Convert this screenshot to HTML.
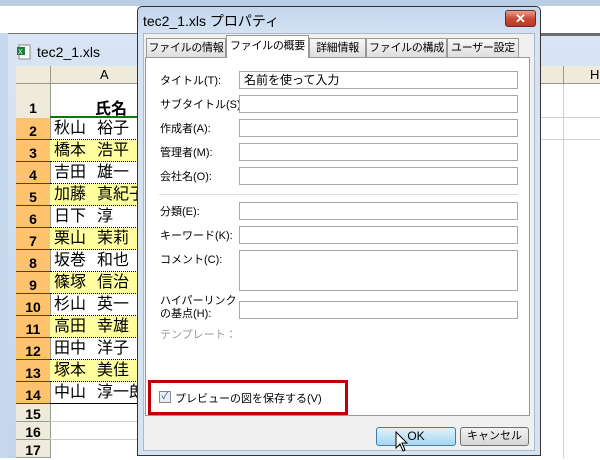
<!DOCTYPE html>
<html><head><meta charset="utf-8"><style>
*{margin:0;padding:0;box-sizing:border-box}
body{width:600px;height:458px;overflow:hidden;position:relative;background:#fff;font-family:"Liberation Sans","Noto Sans CJK JP",sans-serif;font-size:12px;color:#000}
.a{position:absolute}
.lbl{position:absolute;left:160px;font-size:11px}
.inp{position:absolute;left:239px;width:279px;height:18px;background:#fff;border:1px solid #a9a9a9}
.rh{position:absolute;left:16px;width:34px;height:22px;background:#ffc36e;border-bottom:1px solid #1a3fbf;font-size:14px;font-weight:bold;text-align:center;line-height:26px}
.cell{position:absolute;left:50px;width:90px;height:22px;border-bottom:1px dotted #000;font-size:16px;line-height:22px;padding-left:4px;white-space:nowrap;overflow:hidden}
.cell span{margin-left:11px}
.tab{position:absolute;top:38px;height:20px;border:1px solid #999;border-bottom:none;background:linear-gradient(#f8f8f8,#dcdcdc);font-size:11px;line-height:18px;text-align:center;white-space:nowrap;overflow:hidden;letter-spacing:-0.3px}
</style></head><body>
<div class="a" style="left:0;top:0;width:600px;height:6px;background:#b9cde5"></div>
<div class="a" style="left:0;top:6px;width:600px;height:27px;background:#fff"></div>
<div class="a" style="left:0;top:33px;width:600px;height:425px;background:#c6d8ee"></div>
<div class="a" style="left:8px;top:33px;width:592px;height:425px;background:linear-gradient(#d9e5f4,#c3d5ec);border-top:1px solid #777"></div>
<div class="a" style="left:540px;top:33px;width:60px;height:3px;background:#6d6d6d"></div>
<svg class="a" style="left:16px;top:44px" width="16" height="16"><rect x="3" y="1" width="11" height="14" fill="#fff" stroke="#888"/><rect x="1" y="3" width="8" height="8" fill="#1e7b3a"/><text x="2" y="10" font-size="7" fill="#fff" font-family="Liberation Sans">X</text></svg>
<div class="a" style="left:37px;top:44px;font-size:14px">tec2_1.xls</div>
<div class="a" style="left:16px;top:66px;width:584px;height:392px;background:#fff"></div>
<div class="a" style="left:16px;top:66px;width:584px;height:18px;background:#efebdc;border-bottom:1px solid #9a9a8a"></div>
<div class="a" style="left:50px;top:66px;width:1px;height:392px;background:#9a9a8a"></div>
<div class="a" style="left:100px;top:67px;font-size:13px">A</div>
<div class="a" style="left:563px;top:66px;width:1px;height:392px;background:#d0d0d0"></div>
<div class="a" style="left:563px;top:66px;width:1px;height:18px;background:#9a9a8a"></div>
<div class="a" style="left:590px;top:67px;font-size:13px">H</div>
<div class="a" style="left:540px;top:117px;width:60px;height:1px;background:#d0d0d0"></div>
<div class="a" style="left:540px;top:139px;width:60px;height:1px;background:#d0d0d0"></div>
<div class="a" style="left:16px;top:84px;width:34px;height:34px;background:#efebdc;font-size:14px;font-weight:bold;text-align:center;line-height:48px">1</div>
<div class="a" style="left:95px;top:95px;font-size:16px;font-weight:bold">氏名</div>
<div class="a" style="left:50px;top:116px;width:90px;height:2px;background:#0a7a0a"></div>
<div class="rh" style="top:118px">2</div><div class="cell" style="top:118px">秋山<span>裕子</span></div>
<div class="rh" style="top:140px">3</div><div class="cell" style="top:140px;background:#ffffa0">橋本<span>浩平</span></div>
<div class="rh" style="top:162px">4</div><div class="cell" style="top:162px">吉田<span>雄一</span></div>
<div class="rh" style="top:184px">5</div><div class="cell" style="top:184px;background:#ffffa0">加藤<span>真紀子</span></div>
<div class="rh" style="top:206px">6</div><div class="cell" style="top:206px">日下<span>淳</span></div>
<div class="rh" style="top:228px">7</div><div class="cell" style="top:228px;background:#ffffa0">栗山<span>茉莉</span></div>
<div class="rh" style="top:250px">8</div><div class="cell" style="top:250px">坂巻<span>和也</span></div>
<div class="rh" style="top:272px">9</div><div class="cell" style="top:272px;background:#ffffa0">篠塚<span>信治</span></div>
<div class="rh" style="top:294px">10</div><div class="cell" style="top:294px">杉山<span>英一</span></div>
<div class="rh" style="top:316px">11</div><div class="cell" style="top:316px;background:#ffffa0">高田<span>幸雄</span></div>
<div class="rh" style="top:338px">12</div><div class="cell" style="top:338px">田中<span>洋子</span></div>
<div class="rh" style="top:360px">13</div><div class="cell" style="top:360px;background:#ffffa0">塚本<span>美佳</span></div>
<div class="rh" style="top:382px">14</div><div class="cell" style="top:382px;border-bottom:1px solid #000">中山<span>淳一郎</span></div>
<div class="rh" style="top:404px;height:18px;background:#efebdc;border-bottom:1px solid #9a9a8a;line-height:20px">15</div>
<div class="rh" style="top:422px;height:18px;background:#efebdc;border-bottom:1px solid #9a9a8a;line-height:20px">16</div>
<div class="rh" style="top:440px;height:18px;background:#efebdc;border-bottom:1px solid #9a9a8a;line-height:20px">17</div>
<div class="a" style="left:50px;top:421px;width:90px;height:1px;background:#d0d0d0"></div>
<div class="a" style="left:50px;top:439px;width:90px;height:1px;background:#d0d0d0"></div>
<!-- dialog -->
<div class="a" style="left:137px;top:6px;width:404px;height:450px;border:1px solid #333;border-radius:5px 5px 0 0;background:linear-gradient(#c3d6ee,#d6e3f3 30px,#d6e3f3)"></div>
<div class="a" style="left:143px;top:11px;font-size:14px">tec2_1.xls プロパティ</div>
<div class="a" style="left:505px;top:10px;width:31px;height:17px;border:1px solid #6d2a22;border-radius:3px;background:linear-gradient(#e8a090,#c84c38 50%,#b83a28);color:#fff;font-weight:bold;text-align:center;line-height:15px;font-size:13px">✕</div>
<div class="a" style="left:143px;top:33px;width:392px;height:418px;background:#f0f0f0;border:1px solid #b0b8c8"></div>
<div class="tab" style="left:146px;width:80px">ファイルの情報</div>
<div class="tab" style="left:226px;top:35px;width:83px;height:23px;line-height:20px;background:#fff;z-index:2">ファイルの概要</div>
<div class="tab" style="left:309px;width:57px">詳細情報</div>
<div class="tab" style="left:366px;width:81px">ファイルの構成</div>
<div class="tab" style="left:447px;width:72px">ユーザー設定</div>
<div class="a" style="left:145px;top:57px;width:385px;height:359px;background:#fff;border:1px solid #999"></div>
<div class="lbl" style="top:72px">タイトル(T):</div><div class="inp" style="top:71px;padding-left:4px;font-size:12px;line-height:16px">名前を使って入力</div>
<div class="lbl" style="top:96px">サブタイトル(S):</div><div class="inp" style="top:95px"></div>
<div class="lbl" style="top:120px">作成者(A):</div><div class="inp" style="top:119px"></div>
<div class="lbl" style="top:144px">管理者(M):</div><div class="inp" style="top:143px"></div>
<div class="lbl" style="top:168px">会社名(O):</div><div class="inp" style="top:167px"></div>
<div class="a" style="left:159px;top:194px;width:359px;height:1px;background:#d5dde6"></div>
<div class="lbl" style="top:203px">分類(E):</div><div class="inp" style="top:202px"></div>
<div class="lbl" style="top:227px">キーワード(K):</div><div class="inp" style="top:226px"></div>
<div class="lbl" style="top:251px">コメント(C):</div><div class="inp" style="top:250px;height:41px"></div>
<div class="lbl" style="top:295px;line-height:13px">ハイパーリンク<br>の基点(H):</div><div class="inp" style="top:301px"></div>
<div class="lbl" style="top:326px;color:#9a9a9a">テンプレート：</div>
<div class="a" style="left:148px;top:380px;width:200px;height:35px;border:3px solid #c00000"></div>
<div class="a" style="left:159px;top:391px;width:12px;height:12px;border:1px solid #8a8a8a;background:#e8eef6;font-size:10px;line-height:10px;text-align:center;color:#3a5a9a">✓</div>
<div class="lbl" style="left:175px;top:390px">プレビューの図を保存する(V)</div>
<div class="a" style="left:376px;top:427px;width:80px;height:19px;border:1px solid #3c7fb1;border-radius:3px;background:linear-gradient(#e0f2fc,#a6d6f2);text-align:center;font-size:12px;line-height:17px">OK</div>
<div class="a" style="left:460px;top:427px;width:69px;height:19px;border:1px solid #707070;border-radius:3px;background:linear-gradient(#f2f2f2,#d6d6d6);text-align:center;font-size:11px;line-height:17px">キャンセル</div>
<svg class="a" style="left:395px;top:431px" width="14" height="22"><path d="M1 1 L1 17 L5 13 L8 20 L10 19 L7 12 L12 12 Z" fill="#fff" stroke="#000" stroke-width="1"/></svg>
</body></html>
